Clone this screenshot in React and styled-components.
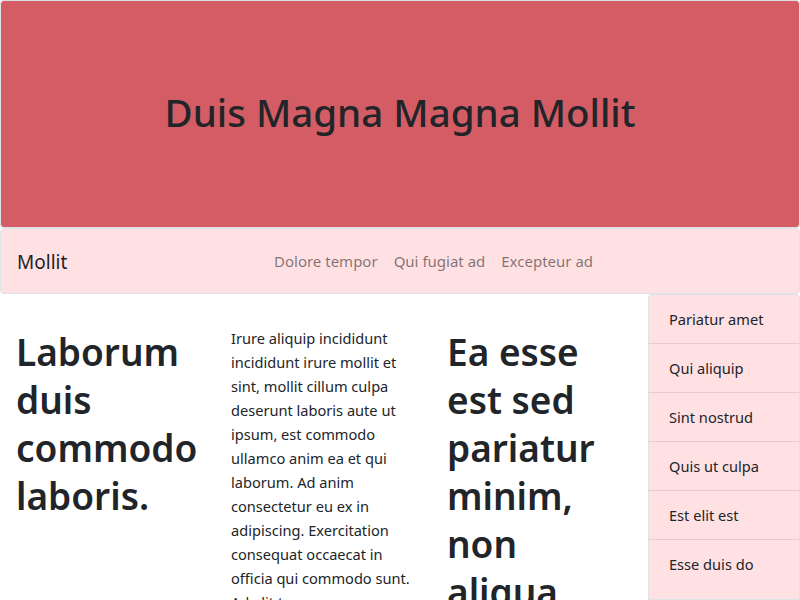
import React from "react";
import styled, { createGlobalStyle } from "styled-components";

const Global = createGlobalStyle`
  html, body { margin: 0; padding: 0; background: #fff; }
  body {
    font-family: "Noto Sans", "Open Sans", sans-serif;
    color: #212529;
    overflow: hidden;
  }
  * { box-sizing: border-box; }
`;

const Page = styled.div`
  width: 800px;
  height: 600px;
  overflow: hidden;
  display: flex;
  flex-direction: column;
`;

const Hero = styled.header`
  height: 228px;
  flex-shrink: 0;
  background: #d45d65;
  border: 1px solid #dee2e6;
  border-radius: 4px;
  display: flex;
  align-items: center;
  justify-content: center;
`;

const HeroTitle = styled.h1`
  margin: 0 0 5px;
  font-size: 38.5px;
  font-weight: 500;
  color: #212529;
`;

const Nav = styled.nav`
  height: 66px;
  flex-shrink: 0;
  background: #ffe0e3;
  border: 1px solid #dee2e6;
  border-radius: 4px;
  display: flex;
  align-items: center;
  padding: 0 16px;
`;

const Brand = styled.div`
  font-size: 19px;
  color: #212529;
  width: 257px;
  padding-top: 2px;
`;

const NavLinks = styled.div`
  display: flex;
  gap: 16px;
`;

const NavLink = styled.a`
  font-size: 15px;
  color: rgba(0, 0, 0, 0.5);
  text-decoration: none;
`;

const Body = styled.div`
  display: flex;
  flex: 1;
  min-height: 0;
`;

const Main = styled.main`
  width: 648px;
  display: grid;
  grid-template-columns: repeat(3, 1fr);
  align-items: start;
  padding-top: 28px;
`;

const Col = styled.div`
  padding: 0 16px 0 ${(p) => (p.$first ? 16 : 15)}px;
`;

const BigHeading = styled.h1`
  margin: 6px 0 0;
  font-size: 37px;
  font-weight: 600;
  line-height: 48px;
  color: #212529;
`;

const Para = styled.p`
  margin: 4px 0 0;
  font-size: 14.6px;
  line-height: 24px;
  color: #212529;
`;

const Sidebar = styled.ul`
  width: 152px;
  margin: 0;
  padding: 0;
  list-style: none;
  background: #ffe0e3;
  border: 1px solid #dee2e6;
  border-radius: 4px 4px 0 0;
`;

const Item = styled.li`
  height: 49px;
  padding: 14px 20px 0;
  font-size: 14.6px;
  color: #212529;
  border-bottom: 1px solid #e8c9cc;
  &:last-child { border-bottom: none; }
`;

export default function App() {
  return (
    <Page>
      <Global />
      <Hero>
        <HeroTitle>Duis Magna Magna Mollit</HeroTitle>
      </Hero>
      <Nav>
        <Brand>Mollit</Brand>
        <NavLinks>
          <NavLink>Dolore tempor</NavLink>
          <NavLink>Qui fugiat ad</NavLink>
          <NavLink>Excepteur ad</NavLink>
        </NavLinks>
      </Nav>
      <Body>
        <Main>
          <Col $first>
            <BigHeading>Laborum duis commodo laboris.</BigHeading>
          </Col>
          <Col>
            <Para>
              Irure aliquip incididunt incididunt irure mollit et sint, mollit
              cillum culpa deserunt laboris aute ut ipsum, est commodo ullamco
              anim ea et qui laborum. Ad anim consectetur eu ex in adipiscing.
              Exercitation consequat occaecat in officia qui commodo sunt. Ad
              elit tempor.
            </Para>
          </Col>
          <Col>
            <BigHeading>Ea esse est sed pariatur minim, non aliqua.</BigHeading>
          </Col>
        </Main>
        <Sidebar>
          <Item>Pariatur amet</Item>
          <Item>Qui aliquip</Item>
          <Item>Sint nostrud</Item>
          <Item>Quis ut culpa</Item>
          <Item>Est elit est</Item>
          <Item>Esse duis do</Item>
        </Sidebar>
      </Body>
    </Page>
  );
}
